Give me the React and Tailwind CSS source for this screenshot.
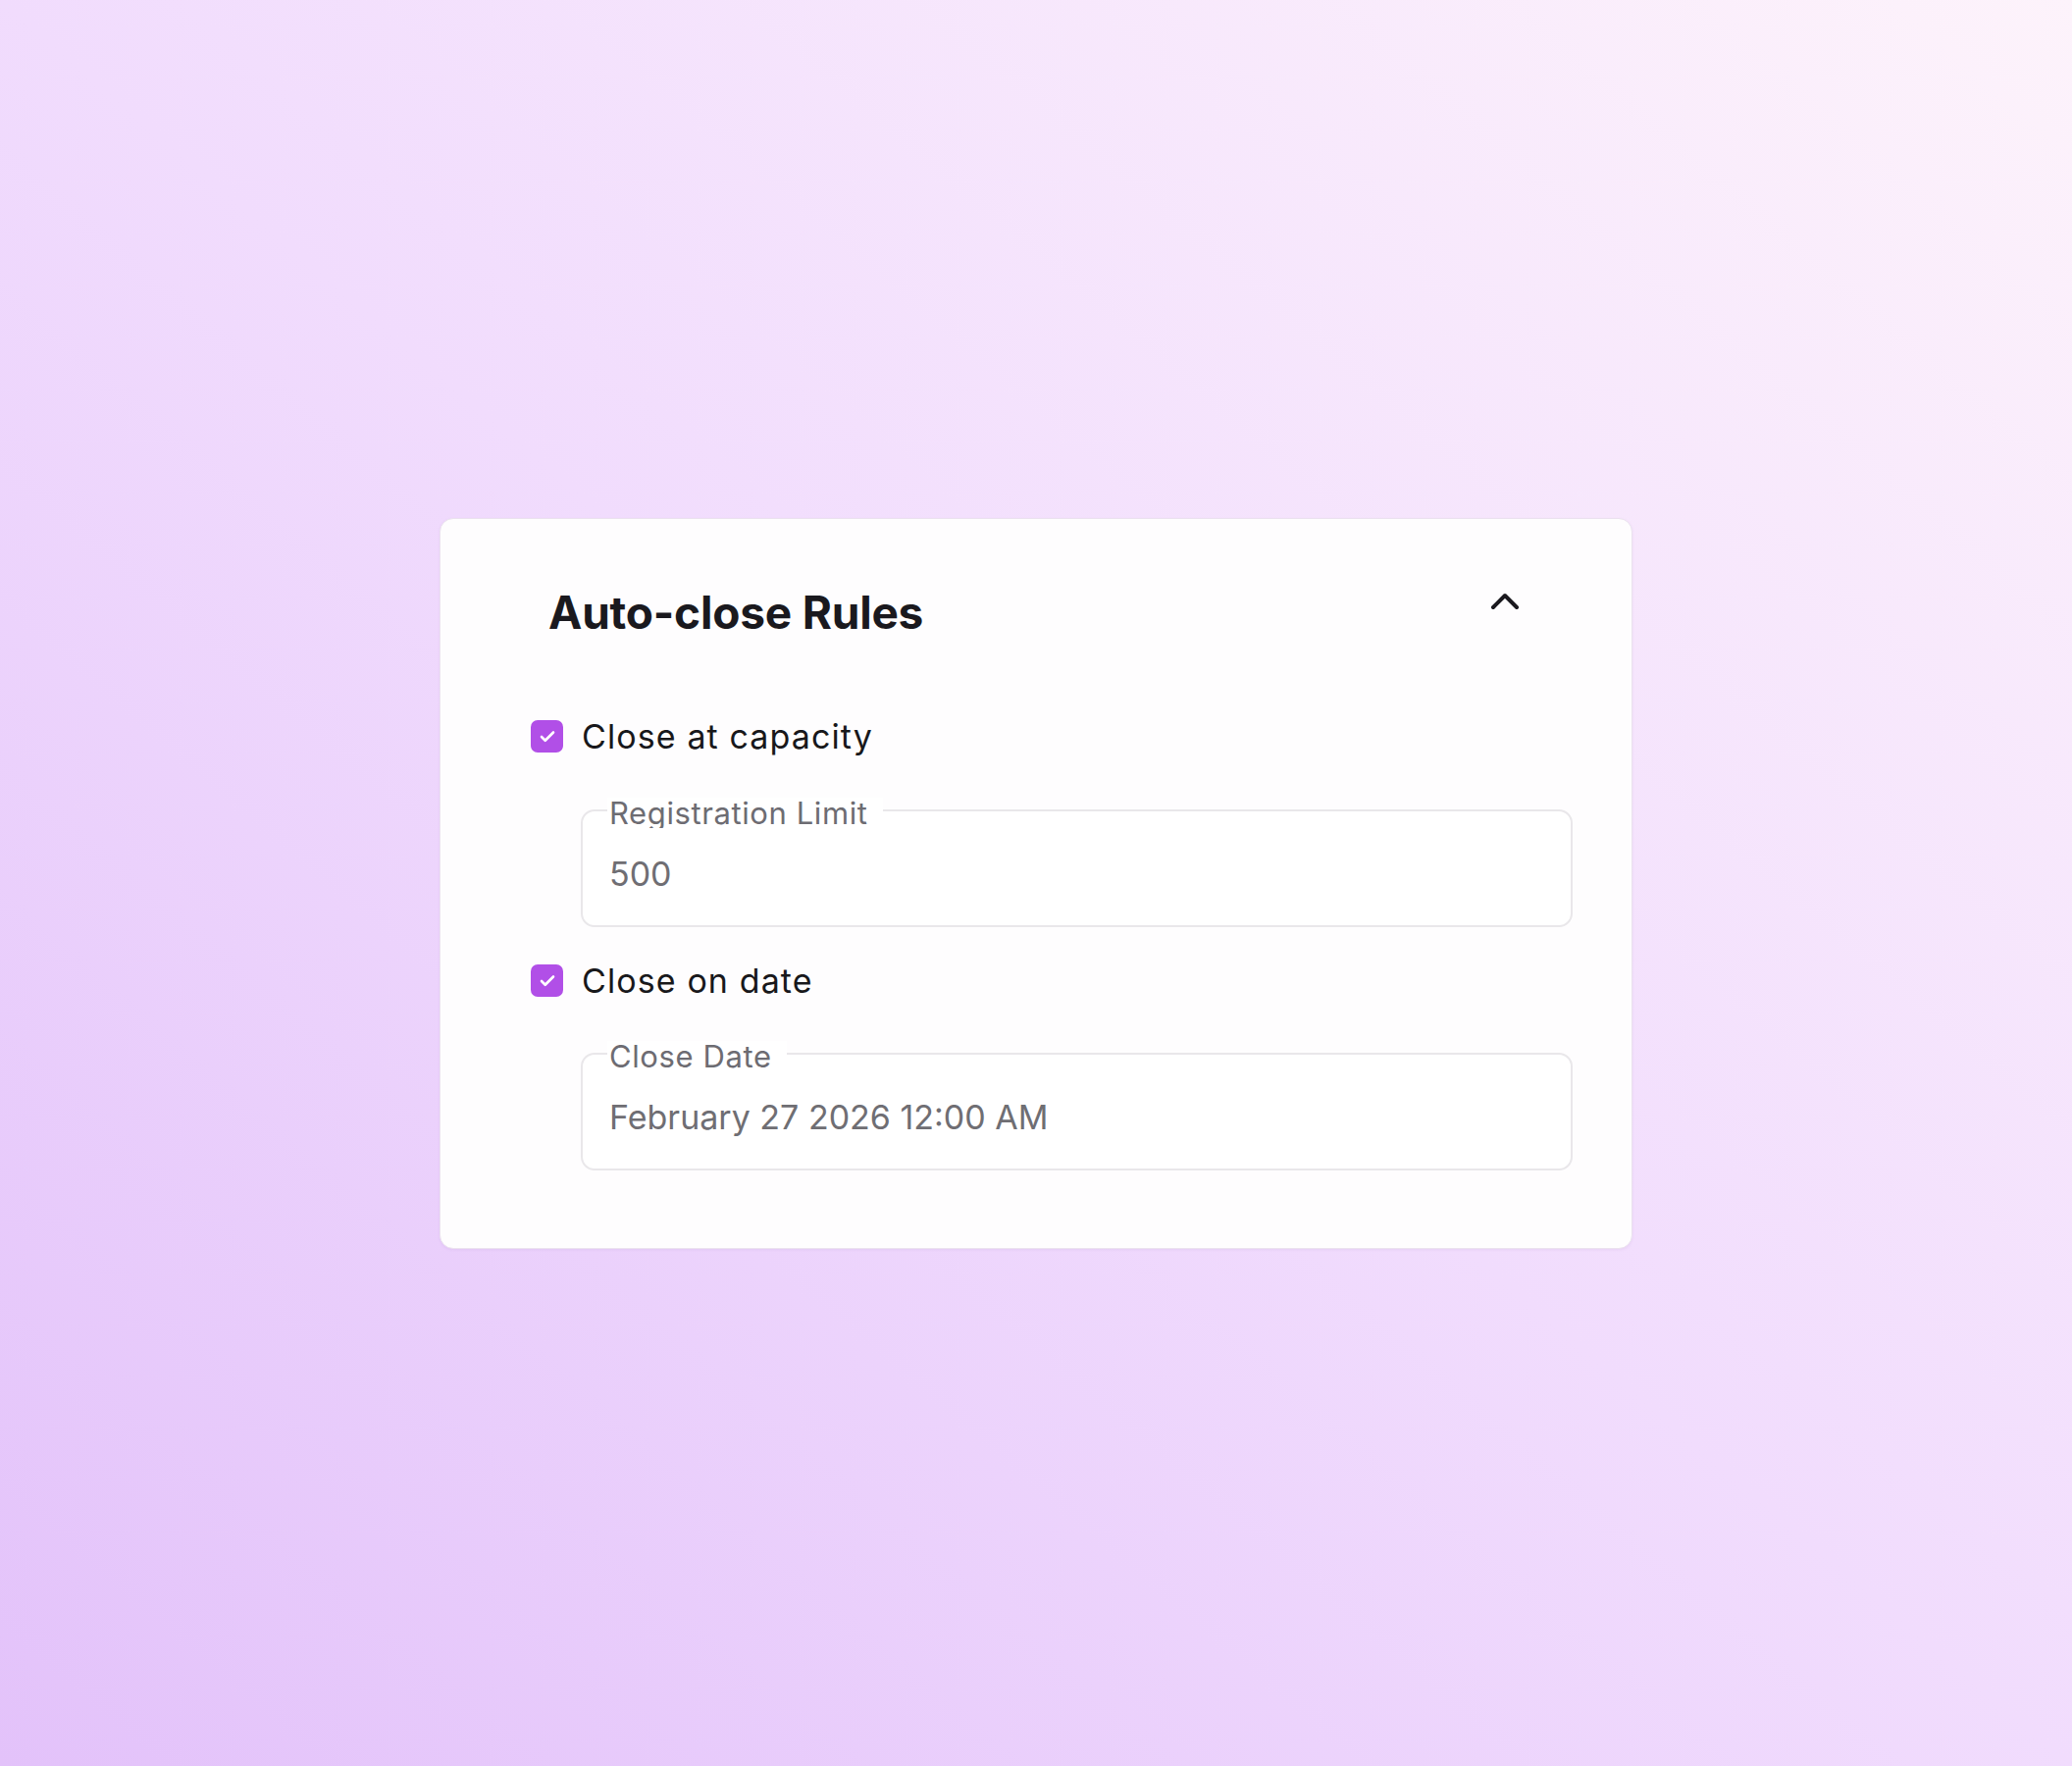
import React from "react";
import { ChevronUp, Check } from "lucide-react";

const font = { fontFamily: "Inter, 'Noto Sans', 'Liberation Sans', sans-serif" };

function CheckRow({ label }) {
  return (
    <label className="flex items-center gap-[19px] h-[44px]">
      <span className="flex items-center justify-center w-[33px] h-[33px] rounded-[7px] bg-[#b14fe7]">
        <Check size={18} strokeWidth={3.5} color="#ffffff" />
      </span>
      <span className="text-[34px] leading-[44px] tracking-[1.1px] text-[#18181b]">{label}</span>
    </label>
  );
}

function OutlinedField({ label, value }) {
  return (
    <div className="relative ml-[51px] h-[120px] rounded-[14px] border-2 border-[#e9e7ea] bg-white px-[27px] pt-[42px]">
      <span className="absolute left-[25px] top-[-14px] h-[31px] overflow-hidden bg-white pl-[2px] pr-[15px] text-[31px] leading-[31px] tracking-[0.6px] text-[#6d6c72]">
        {label}
      </span>
      <div className="text-[34px] leading-[44px] text-[#6f6e73]">{value}</div>
    </div>
  );
}

export default function App() {
  return (
    <div
      style={font}
      className="min-h-screen w-full flex items-center justify-center bg-linear-to-tr from-[#e3c2fa] via-[#f1dcfd] to-[#fdf3fb]"
    >
      <section className="w-[1216px] rounded-[14px] border border-[#ebe2ef] bg-[#fefdfe] pt-[60px] pb-[79px] pl-[92px] pr-[60px] shadow-[0_1px_3px_rgba(120,80,150,0.08)]">
        <div className="flex items-start justify-between pl-[18px] pr-[45px]">
          <h2 className="mt-[7px] text-[46px] leading-[56px] font-bold tracking-[-0.2px] text-[#1a191e]">
            Auto-close Rules
          </h2>
          <ChevronUp size={48} strokeWidth={2} color="#1a191e" />
        </div>

        <div className="mt-[77px] flex flex-col">
          <CheckRow label="Close at capacity" />
          <div className="mt-[52px]">
            <OutlinedField label="Registration Limit" value="500" />
          </div>
          <div className="mt-[33px]">
            <CheckRow label="Close on date" />
          </div>
          <div className="mt-[51px]">
            <OutlinedField label="Close Date" value="February 27 2026 12:00 AM" />
          </div>
        </div>
      </section>
    </div>
  );
}
